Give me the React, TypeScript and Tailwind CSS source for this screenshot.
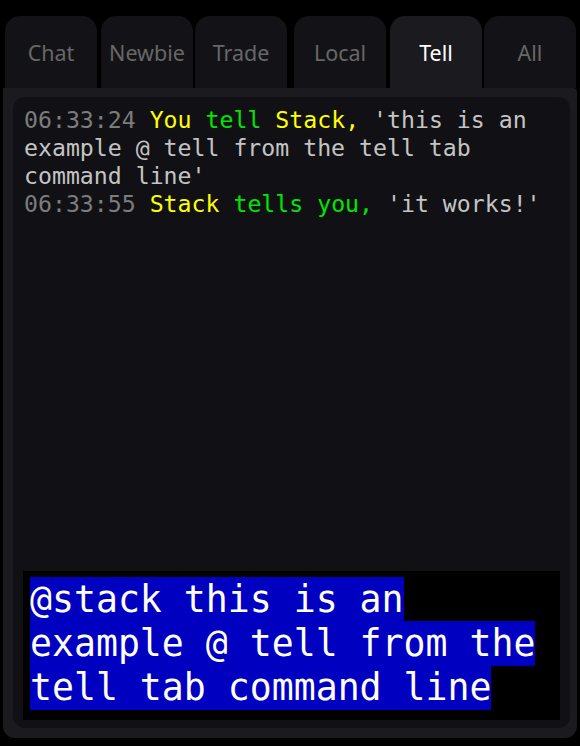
import React from "react";

const tabs = ["Chat", "Newbie", "Trade", "Local", "Tell", "All"];
const margins = ["ml-[5px]", "ml-[4px]", "ml-[2px]", "ml-[7px]", "ml-[4px]", "ml-[2px]"];

export default function App() {
  return (
    <div className="w-[580px] h-[746px] bg-black flex flex-col overflow-hidden">
      <div className="flex pt-4 h-[88px]">
        {tabs.map((t, i) => {
          const active = t === "Tell";
          return (
            <div
              key={t}
              className={
                margins[i] +
                " w-[92px] h-[72px] rounded-t-[15px] flex items-center justify-center pt-[2px] text-[21.5px] " +
                (active ? "bg-[#1b1b1f] text-white" : "bg-[#131317] text-[#676767]")
              }
              style={{ fontFamily: '"Noto Sans", "Open Sans", sans-serif' }}
            >
              {t}
            </div>
          );
        })}
      </div>
      <div className="ml-[3px] w-[574px] h-[650px] bg-[#1b1b1f] rounded-b-[12px] rounded-tr-[4px] pl-[10px] pr-[7px] pt-[9px] pb-[10px] flex flex-col">
        <div className="flex-1 bg-[#111115] rounded-[12px] flex flex-col pb-[8px]">
          <div
            className="flex-1 pl-[11px] pr-[8px] pt-[9px] text-[23.2px] leading-[28px] text-[#c4c4c4]"
            style={{ fontFamily: '"DejaVu Sans Mono", monospace' }}
          >
            <div>
              <span className="text-[#7c7c7c]">06:33:24</span>{" "}
              <span className="text-[#ffff00]">You</span>{" "}
              <span className="text-[#00e600]">tell</span>{" "}
              <span className="text-[#ffff00]">Stack,</span> 'this is an example @ tell from the tell tab command line'
            </div>
            <div>
              <span className="text-[#7c7c7c]">06:33:55</span>{" "}
              <span className="text-[#ffff00]">Stack</span>{" "}
              <span className="text-[#00e600]">tells you,</span> 'it works!'
            </div>
          </div>
          <div
            className="mx-[10px] h-[149px] bg-black pl-[7px] pr-[4px] pt-[7px] text-[36.5px] leading-[44px] text-white"
            style={{ fontFamily: '"DejaVu Sans Mono", monospace' }}
          >
            <span className="bg-[#0000c0] py-[1px]">@stack this is an example @ tell from the tell tab command line</span>
          </div>
        </div>
      </div>
    </div>
  );
}
